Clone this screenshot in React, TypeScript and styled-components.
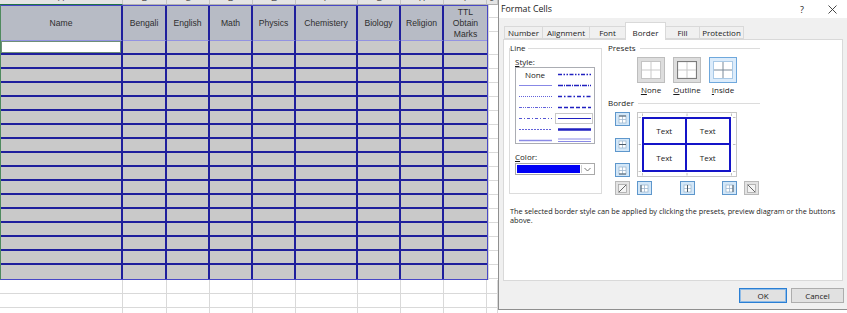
import React from 'react';
import styled, { createGlobalStyle } from 'styled-components';

const UI_FONT = '"Open Sans", "Noto Sans", "Liberation Sans", sans-serif';
const SHEET_FONT = '"Liberation Sans", Arial, sans-serif';

const GlobalStyle = createGlobalStyle`
  html, body {
    margin: 0;
    padding: 0;
    background: #ffffff;
  }
  body {
    width: 847px;
    height: 313px;
    overflow: hidden;
  }
`;

const Screen = styled.div`
  display: flex;
  width: 847px;
  height: 313px;
  overflow: hidden;
`;

/* ---------- spreadsheet ---------- */

const columns = [
  { key: 'A', label: ['Name'], width: 122 },
  { key: 'B', label: ['Bengali'], width: 44 },
  { key: 'C', label: ['English'], width: 43 },
  { key: 'D', label: ['Math'], width: 43 },
  { key: 'E', label: ['Physics'], width: 43 },
  { key: 'F', label: ['Chemistery'], width: 62 },
  { key: 'G', label: ['Biology'], width: 43 },
  { key: 'H', label: ['Religion'], width: 43 },
  { key: 'I', label: ['TTL', 'Obtain', 'Marks'], width: 43 },
];

const ROWS = 17;
const LINE = '#1f1f9c';

const Sheet = styled.div`
  width: 498px;
  flex-shrink: 0;
  display: flex;
  flex-direction: column;
  font-family: ${SHEET_FONT};
`;

const LetterStrip = styled.div`
  display: flex;
  height: 5px;
  overflow: hidden;
  background: #e4e4e4;
`;

const Letter = styled.div<{ $w?: number; $selected?: boolean }>`
  ${p => (p.$w ? `width: ${p.$w}px; flex-shrink: 0;` : 'flex: 1;')}
  box-sizing: border-box;
  height: 5px;
  border-right: 1px solid #c4c4c4;
  border-bottom: 1px solid ${p => (p.$selected ? '#217346' : '#b0b0b0')};
  text-align: center;
  overflow: hidden;
`;

const LetterText = styled.span`
  display: block;
  margin-top: -7px;
  font-size: 9px;
  line-height: 10px;
  color: #555555;
`;

const TableBand = styled.div`
  display: flex;
`;

const Grid = styled.table`
  border-collapse: separate;
  border-spacing: 0;
  table-layout: fixed;
  border: 1px solid #4848c6;
  border-left-color: #4f8a5e;
  font-size: 8.6px;
  color: #2e2e2e;
`;

const HeadCell = styled.th<{ $w: number; $last?: boolean }>`
  width: ${p => p.$w}px;
  height: 35px;
  box-sizing: border-box;
  padding: 0;
  font-weight: normal;
  line-height: 11px;
  text-align: center;
  vertical-align: middle;
  background: #b7bbc5;
  border-right: ${p => (p.$last ? 'none' : `2px solid ${LINE}`)};
  border-bottom: 1px solid #9393e2;
`;

const Cell = styled.td<{ $last?: boolean; $bottom?: boolean; $active?: boolean }>`
  height: 14px;
  box-sizing: border-box;
  padding: 0;
  background: ${p => (p.$active ? '#ffffff' : '#c9c9c9')};
  border-right: ${p => (p.$last ? 'none' : `2px solid ${LINE}`)};
  border-bottom: ${p => (p.$bottom ? 'none' : `2px solid ${LINE}`)};
  box-shadow: ${p => (p.$active ? 'inset 0 0 0 1px #6f8f78' : 'none')};
`;

const SpareStrip = styled.div`
  flex: 1;
  border-left: 1px solid #d6d6d6;
  background-image: repeating-linear-gradient(to bottom, #ffffff 0 13px, #d9d9d9 13px 14px);
  background-position: 0 36px;
`;

const BlankBand = styled.div`
  flex: 1;
  display: flex;
`;

const BlankCol = styled.div<{ $w?: number }>`
  ${p => (p.$w ? `width: ${p.$w}px; flex-shrink: 0;` : 'flex: 1;')}
  box-sizing: border-box;
  border-right: 1px solid #d9d9d9;
  background-image: repeating-linear-gradient(to bottom, #ffffff 0 13px, #d9d9d9 13px 14px);
`;

const letterWidths = [123, 44, 43, 43, 43, 62, 43, 43, 43];

const Spreadsheet = () => (
  <Sheet>
    <LetterStrip>
      {columns.map((c, i) => (
        <Letter key={c.key} $w={letterWidths[i]} $selected={i === 0}>
          <LetterText>{c.key}</LetterText>
        </Letter>
      ))}
      <Letter>
        <LetterText>J</LetterText>
      </Letter>
    </LetterStrip>
    <TableBand>
      <Grid>
        <thead>
          <tr>
            {columns.map((c, i) => (
              <HeadCell key={c.key} $w={c.width} $last={i === columns.length - 1}>
                {c.label.map((l, j) => (
                  <React.Fragment key={l}>
                    {j > 0 && <br />}
                    {l}
                  </React.Fragment>
                ))}
              </HeadCell>
            ))}
          </tr>
        </thead>
        <tbody>
          {Array.from({ length: ROWS }).map((_, r) => (
            <tr key={r}>
              {columns.map((c, i) => (
                <Cell
                  key={c.key}
                  $last={i === columns.length - 1}
                  $bottom={r === ROWS - 1}
                  $active={r === 0 && i === 0}
                />
              ))}
            </tr>
          ))}
        </tbody>
      </Grid>
      <SpareStrip />
    </TableBand>
    <BlankBand>
      {letterWidths.map((w, i) => (
        <BlankCol key={i} $w={w} />
      ))}
      <BlankCol />
    </BlankBand>
  </Sheet>
);

/* ---------- Format Cells dialog ---------- */

const Dialog = styled.div`
  width: 349px;
  height: 310px;
  flex-shrink: 0;
  box-sizing: border-box;
  display: flex;
  flex-direction: column;
  background: #f0f0f0;
  border-left: 1px solid #8f8f8f;
  border-bottom: 1px solid #8f8f8f;
  font-family: ${UI_FONT};
  font-size: 8px;
  color: #1b1b1b;
`;

const TitleBar = styled.div`
  height: 18px;
  display: flex;
  align-items: center;
  background: #ffffff;
  padding-left: 2px;
`;

const TitleText = styled.span`
  flex: 1;
  font-size: 8.8px;
`;

const TitleButton = styled.div`
  width: 30px;
  height: 18px;
  display: flex;
  align-items: center;
  justify-content: center;
  font-size: 9px;
  color: #222222;
`;

const TabStrip = styled.div`
  height: 21px;
  display: flex;
  align-items: flex-end;
  padding-left: 6px;
  position: relative;
  z-index: 1;
`;

const Tab = styled.div<{ $active?: boolean; $w: number }>`
  width: ${p => p.$w}px;
  height: ${p => (p.$active ? '18px' : '13px')};
  box-sizing: border-box;
  margin-left: -1px;
  margin-bottom: ${p => (p.$active ? '-1px' : '0')};
  display: flex;
  align-items: center;
  justify-content: center;
  padding-top: ${p => (p.$active ? '1px' : '0')};
  background: ${p => (p.$active ? '#ffffff' : '#f0f0f0')};
  border: 1px solid #d9d9d9;
  border-bottom: ${p => (p.$active ? 'none' : '1px solid #d9d9d9')};
  font-size: 8px;
  white-space: nowrap;
`;

const Panel = styled.div`
  height: 242px;
  box-sizing: border-box;
  margin: 0 4px 0 4px;
  background: #ffffff;
  border: 1px solid #d9d9d9;
  padding: 3px 0 0 5px;
`;

const TopRow = styled.div`
  display: flex;
  gap: 6px;
`;

const LineGroup = styled.fieldset`
  width: 93px;
  height: 151px;
  box-sizing: border-box;
  margin: 0;
  padding: 0;
  border: 1px solid #dcdcdc;
`;

const GroupLegend = styled.legend`
  padding: 0 2px 0 0;
  margin-left: 0;
  line-height: 10px;
`;

const GroupInner = styled.div`
  padding-left: 5px;
`;

const FieldLabel = styled.div<{ $gap: number }>`
  margin-top: ${p => p.$gap}px;
  line-height: 10px;
`;

const StyleList = styled.div`
  width: 80px;
  height: 77px;
  box-sizing: border-box;
  border: 1px solid #abadb3;
  display: grid;
  grid-template-columns: 38px 40px;
  grid-auto-rows: 11px;
  padding-top: 1px;
`;

const StyleCell = styled.div<{ $boxed?: boolean }>`
  display: flex;
  align-items: center;
  justify-content: center;
  box-sizing: border-box;
  margin: 0 1px;
  border: 1px solid ${p => (p.$boxed ? '#c8c8c8' : 'transparent')};
`;

const ColorSelect = styled.div`
  margin-top: 1px;
  width: 80px;
  height: 12px;
  box-sizing: border-box;
  display: flex;
  border: 1px solid #a9a9a9;
  padding: 1px;
  gap: 1px;
`;

const ColorSwatch = styled.div`
  flex: 1;
  background: #0000f5;
`;

const ArrowBox = styled.div`
  width: 11px;
  display: flex;
  align-items: center;
  justify-content: center;
  border-left: 1px solid #d0d0d0;
`;

const RightCol = styled.div`
  width: 152px;
  display: flex;
  flex-direction: column;
`;

const SectionHead = styled.div<{ $gap?: number }>`
  display: flex;
  align-items: center;
  gap: 4px;
  line-height: 10px;
  margin-top: ${p => p.$gap ?? 0}px;
`;

const SectionRule = styled.div`
  flex: 1;
  border-top: 1px solid #dcdcdc;
`;

const PresetRow = styled.div`
  display: flex;
  gap: 8px;
  margin: 4px 0 0 29px;
`;

const PresetItem = styled.div`
  width: 28px;
  display: flex;
  flex-direction: column;
  align-items: center;
`;

const PresetButton = styled.div<{ $active?: boolean }>`
  width: 28px;
  height: 26px;
  box-sizing: border-box;
  display: flex;
  align-items: center;
  justify-content: center;
  background: ${p => (p.$active ? '#dcecfb' : '#dddddd')};
  border: 1px solid ${p => (p.$active ? '#6fa8dc' : '#bdbdbd')};
`;

const PresetLabel = styled.div`
  margin-top: 2px;
  line-height: 10px;
  white-space: nowrap;
`;

const BorderGrid = styled.div`
  margin: 4px 0 0 7px;
  display: grid;
  grid-template-columns: 15px 100px 15px;
  grid-template-rows: 65px 14px;
  column-gap: 7px;
  row-gap: 4px;
`;

const ButtonStack = styled.div`
  display: flex;
  flex-direction: column;
  justify-content: space-between;
`;

const ButtonSpread = styled.div`
  display: flex;
  justify-content: space-between;
`;

const EdgeButton = styled.div<{ $plain?: boolean }>`
  width: 15px;
  height: 14px;
  box-sizing: border-box;
  display: flex;
  align-items: center;
  justify-content: center;
  background: ${p => (p.$plain ? '#e3e3e3' : '#d3e7f8')};
  border: 1px solid ${p => (p.$plain ? '#b9b9b9' : '#5e97cc')};
`;

const Preview = styled.div`
  position: relative;
  box-sizing: border-box;
  border: 1px solid #c6c6c6;
  background: #ffffff;
  padding: 4px 5px 4px 4px;
`;

const PreviewTicks = styled.svg`
  position: absolute;
  inset: 0;
`;

const PreviewTable = styled.div`
  position: relative;
  height: 100%;
  box-sizing: border-box;
  display: grid;
  grid-template-columns: 1fr 1fr;
  grid-template-rows: 1fr 1fr;
  border: 2px solid #1414c8;
`;

const PreviewCell = styled.div<{ $right?: boolean; $bottom?: boolean }>`
  display: flex;
  align-items: center;
  justify-content: center;
  border-right: ${p => (p.$right ? '2px solid #1414c8' : 'none')};
  border-bottom: ${p => (p.$bottom ? '2px solid #1414c8' : 'none')};
`;

const Description = styled.p`
  margin: 12px 0 0 1px;
  width: 334px;
  font-size: 7.3px;
  line-height: 9px;
`;

const Footer = styled.div`
  flex: 1;
  display: flex;
  justify-content: flex-end;
  align-items: flex-start;
  gap: 4px;
  padding: 7px 3px 0 0;
`;

const DialogButton = styled.div<{ $default?: boolean; $w: number }>`
  width: ${p => p.$w}px;
  height: 15px;
  box-sizing: border-box;
  display: flex;
  align-items: center;
  justify-content: center;
  background: #e1e1e1;
  border: 1px solid ${p => (p.$default ? '#2a7fd4' : '#adadad')};
  box-shadow: ${p => (p.$default ? 'inset 0 0 0 1px #8fbbe6' : 'none')};
`;

/* ---------- drawings ---------- */

const CloseIcon = () => (
  <svg width="9" height="9" viewBox="0 0 9 9">
    <path d="M0.5 0.5 L8.5 8.5 M8.5 0.5 L0.5 8.5" stroke="#333" strokeWidth="0.9" />
  </svg>
);

const ChevronIcon = () => (
  <svg width="7" height="5" viewBox="0 0 7 5">
    <path d="M0.5 1 L3.5 4 L6.5 1" fill="none" stroke="#666" strokeWidth="0.9" />
  </svg>
);

type Sample = { dash?: string; width: number; color: string; double?: boolean; boxed?: boolean };

const LineSample = ({ dash, width, color, double }: Sample) => (
  <svg width="33" height="5" viewBox="0 0 33 5">
    {double ? (
      <>
        <line x1="0" y1="1" x2="33" y2="1" stroke={color} strokeWidth="1" />
        <line x1="0" y1="3.5" x2="33" y2="3.5" stroke={color} strokeWidth="1" />
      </>
    ) : (
      <line x1="0" y1="2.5" x2="33" y2="2.5" stroke={color} strokeWidth={width} strokeDasharray={dash} />
    )}
  </svg>
);

const leftSamples: Sample[] = [
  { width: 0.8, color: '#6a6ae0' },
  { width: 0.8, color: '#3a3ad0', dash: '1 1' },
  { width: 0.8, color: '#3a3ad0', dash: '3 1 1 1 1 1' },
  { width: 0.8, color: '#2a2ac8', dash: '3 2 1 2' },
  { width: 0.8, color: '#3a3ad0', dash: '2 1' },
  { width: 1.4, color: '#8a8ae6' },
];

const rightSamples: Sample[] = [
  { width: 1.6, color: '#2020c0', dash: '4 1.5 1.5 1.5 1.5 1.5' },
  { width: 1.6, color: '#2020c0', dash: '5 1 1 1' },
  { width: 1.6, color: '#2020c0', dash: '4 2 1.5 2' },
  { width: 1.6, color: '#2020c0', dash: '4 2' },
  { width: 1, color: '#2020c0', boxed: true },
  { width: 2.4, color: '#2020c0' },
  { width: 1, color: '#8a8ae6', double: true },
];

const PresetIcon = ({ kind }: { kind: 'none' | 'outline' | 'inside' }) => {
  const outer = kind === 'outline' ? '#7c7c7c' : kind === 'inside' ? '#a9c9e6' : '#c4c4c4';
  const inner = kind === 'inside' ? '#7a8a99' : '#c9c9c9';
  return (
    <svg width="20" height="18" viewBox="0 0 20 18">
      <rect x="0.5" y="0.5" width="19" height="17" fill="#ffffff" stroke={outer} strokeWidth={kind === 'outline' ? 1.2 : 1} />
      <line x1="10" y1="1" x2="10" y2="17" stroke={inner} strokeWidth="1" />
      <line x1="1" y1="9" x2="19" y2="9" stroke={inner} strokeWidth="1" />
    </svg>
  );
};

type Edge = 'top' | 'middle' | 'bottom' | 'left' | 'center' | 'right';

const EdgeIcon = ({ edge }: { edge: Edge }) => {
  const hi: Record<Edge, string> = {
    top: 'M1 1 H8',
    middle: 'M1 4.5 H8',
    bottom: 'M1 8 H8',
    left: 'M1 1 V8',
    center: 'M4.5 1 V8',
    right: 'M8 1 V8',
  };
  return (
    <svg width="9" height="9" viewBox="0 0 9 9">
      <rect x="1" y="1" width="7" height="7" fill="#ffffff" stroke="#9fb8cf" strokeWidth="0.8" />
      <path d="M4.5 1 V8 M1 4.5 H8" stroke="#9fb8cf" strokeWidth="0.8" />
      <path d={hi[edge]} stroke="#4d5a66" strokeWidth="1" />
    </svg>
  );
};

const DiagonalIcon = ({ up }: { up?: boolean }) => (
  <svg width="9" height="9" viewBox="0 0 9 9">
    <rect x="0.5" y="0.5" width="8" height="8" fill="#f4f4f4" stroke="#a8a8a8" strokeWidth="0.8" />
    <path d={up ? 'M1 8 L8 1' : 'M1 1 L8 8'} stroke="#555" strokeWidth="0.9" />
  </svg>
);

const Ticks = () => {
  const xs = [4.5, 49, 93.5];
  const ys = [4.5, 31.5, 58.5];
  return (
    <PreviewTicks width="98" height="63" viewBox="0 0 98 63">
      {xs.map(x => (
        <path key={`x${x}`} d={`M${x} 0.5 V3 M${x} 60 V62.5`} stroke="#b0b0b0" strokeWidth="0.8" />
      ))}
      {ys.map(y => (
        <path key={`y${y}`} d={`M0.5 ${y} H3 M95 ${y} H97.5`} stroke="#b0b0b0" strokeWidth="0.8" />
      ))}
    </PreviewTicks>
  );
};

const tabs = [
  { label: 'Number', width: 39 },
  { label: 'Alignment', width: 48 },
  { label: 'Font', width: 37 },
  { label: 'Border', width: 41 },
  { label: 'Fill', width: 35 },
  { label: 'Protection', width: 45 },
];

const FormatCells = () => (
  <Dialog>
    <TitleBar>
      <TitleText>Format Cells</TitleText>
      <TitleButton>?</TitleButton>
      <TitleButton>
        <CloseIcon />
      </TitleButton>
    </TitleBar>
    <TabStrip>
      {tabs.map(t => (
        <Tab key={t.label} $w={t.width} $active={t.label === 'Border'}>
          {t.label}
        </Tab>
      ))}
    </TabStrip>
    <Panel>
      <TopRow>
        <LineGroup>
          <GroupLegend>Line</GroupLegend>
          <GroupInner>
            <FieldLabel $gap={4}>
              <u>S</u>tyle:
            </FieldLabel>
            <StyleList>
              <StyleCell>None</StyleCell>
              <StyleCell>
                <LineSample {...rightSamples[0]} />
              </StyleCell>
              {leftSamples.map((s, i) => (
                <React.Fragment key={i}>
                  <StyleCell>
                    <LineSample {...s} />
                  </StyleCell>
                  <StyleCell $boxed={rightSamples[i + 1].boxed}>
                    <LineSample {...rightSamples[i + 1]} />
                  </StyleCell>
                </React.Fragment>
              ))}
            </StyleList>
            <FieldLabel $gap={8}>
              <u>C</u>olor:
            </FieldLabel>
            <ColorSelect>
              <ColorSwatch />
              <ArrowBox>
                <ChevronIcon />
              </ArrowBox>
            </ColorSelect>
          </GroupInner>
        </LineGroup>
        <RightCol>
          <SectionHead $gap={0}>
            Presets
            <SectionRule />
          </SectionHead>
          <PresetRow>
            <PresetItem>
              <PresetButton>
                <PresetIcon kind="none" />
              </PresetButton>
              <PresetLabel>
                <u>N</u>one
              </PresetLabel>
            </PresetItem>
            <PresetItem>
              <PresetButton>
                <PresetIcon kind="outline" />
              </PresetButton>
              <PresetLabel>
                <u>O</u>utline
              </PresetLabel>
            </PresetItem>
            <PresetItem>
              <PresetButton $active>
                <PresetIcon kind="inside" />
              </PresetButton>
              <PresetLabel>
                <u>I</u>nside
              </PresetLabel>
            </PresetItem>
          </PresetRow>
          <SectionHead $gap={3}>
            Border
            <SectionRule />
          </SectionHead>
          <BorderGrid>
            <ButtonStack>
              <EdgeButton>
                <EdgeIcon edge="top" />
              </EdgeButton>
              <EdgeButton>
                <EdgeIcon edge="middle" />
              </EdgeButton>
              <EdgeButton>
                <EdgeIcon edge="bottom" />
              </EdgeButton>
            </ButtonStack>
            <Preview>
              <Ticks />
              <PreviewTable>
                <PreviewCell $right $bottom>Text</PreviewCell>
                <PreviewCell $bottom>Text</PreviewCell>
                <PreviewCell $right>Text</PreviewCell>
                <PreviewCell>Text</PreviewCell>
              </PreviewTable>
            </Preview>
            <div />
            <EdgeButton $plain>
              <DiagonalIcon up />
            </EdgeButton>
            <ButtonSpread>
              <EdgeButton>
                <EdgeIcon edge="left" />
              </EdgeButton>
              <EdgeButton>
                <EdgeIcon edge="center" />
              </EdgeButton>
              <EdgeButton>
                <EdgeIcon edge="right" />
              </EdgeButton>
            </ButtonSpread>
            <EdgeButton $plain>
              <DiagonalIcon />
            </EdgeButton>
          </BorderGrid>
        </RightCol>
      </TopRow>
      <Description>
        The selected border style can be applied by clicking the presets, preview diagram or the buttons above.
      </Description>
    </Panel>
    <Footer>
      <DialogButton $default $w={48}>
        OK
      </DialogButton>
      <DialogButton $w={53}>Cancel</DialogButton>
    </Footer>
  </Dialog>
);

const App = () => (
  <>
    <GlobalStyle />
    <Screen>
      <Spreadsheet />
      <FormatCells />
    </Screen>
  </>
);

export default App;
